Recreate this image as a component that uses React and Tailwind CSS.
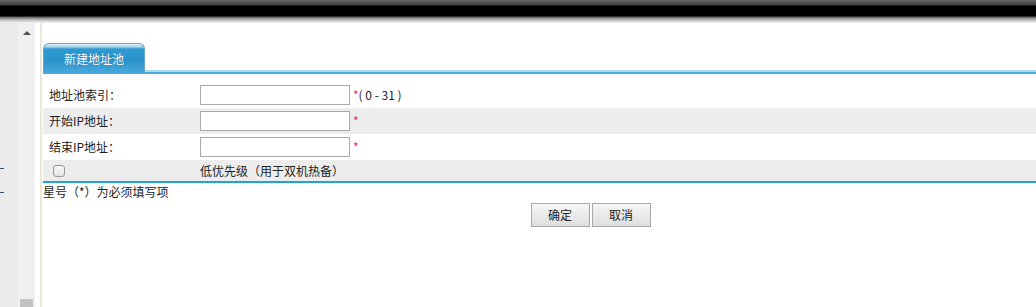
const rows = [
  { label: '地址池索引：', hint: '( 0 - 31 )', bg: 'bg-white' },
  { label: '开始IP地址：', hint: '', bg: 'bg-[#ededed]' },
  { label: '结束IP地址：', hint: '', bg: 'bg-white' },
];

export default function App() {
  return (
    <div className="w-[1036px] h-[307px] overflow-hidden bg-white flex flex-col text-[12px] text-[#222] font-['Noto_Sans_CJK_SC','Noto_Sans',sans-serif]">
      {/* top bar */}
      <div className="h-[23px] shrink-0 bg-[linear-gradient(to_bottom,#6a6a6a_0px,#3c3c3c_5px,#000_6px,#000_16px,#5c5c5c_17px,#a8a8a8_19px,#e4e4e4_22px,#f4f4f4_23px)]" />

      <div className="flex flex-1 min-h-0">
        {/* left sidebar, clipped */}
        <div className="w-[18px] shrink-0 bg-[#ebebeb] relative">
          <div className="absolute left-0 top-[145px] w-[4px] h-px bg-[#3a4a6a]" />
          <div className="absolute left-0 top-[169px] w-[4px] h-px bg-[#3a4a6a]" />
        </div>
        <div className="w-[17px] shrink-0 bg-[#f0f0f0] flex flex-col items-center">
          <div className="mt-[8px] w-0 h-0 border-l-[4px] border-r-[4px] border-b-[4px] border-l-transparent border-r-transparent border-b-[#505050]" />
          <div className="flex-1" />
          <div className="w-[13px] h-[8px] bg-[#c2c2c2]" />
        </div>
        <div className="w-[5px] shrink-0 bg-white" />
        <div className="w-[2px] shrink-0 bg-[#ece8d6]" />

        {/* main */}
        <div className="flex-1 pl-px pt-[20px] flex flex-col">
          <div className="flex items-end h-[31px]">
            <div className="w-[102px] h-[31px] shrink-0 rounded-t-[6px] border border-b-0 border-[#6aa6c8] bg-[linear-gradient(to_bottom,#e0f1f9_0px,#9fd0ea_3px,#2f9ad2_5px,#2a93cb_16px,#4aaadd_30px)] flex items-center justify-center text-white text-[12px] [text-shadow:0_0_1px_rgba(0,60,100,0.5)]">
              新建地址池
            </div>
            <div className="flex-1 h-[4px] bg-[linear-gradient(to_bottom,#a9d9ef_0px,#a9d9ef_2px,#44abdf_2px,#44abdf_4px)]" />
          </div>

          <div className="mt-[8px]">
            {rows.map((r) => (
              <div key={r.label} className={`flex items-center h-[26px] ${r.bg}`}>
                <div className="w-[157px] shrink-0 pl-[6px]">{r.label}</div>
                <div className="w-[150px] h-[20px] shrink-0 border border-[#a9a9a9] bg-white" />
                <span className="ml-[3px] text-[#ff1a6a]">*</span>
                {r.hint && <span className="text-[#222] whitespace-pre">{r.hint}</span>}
              </div>
            ))}
            <div className="flex items-center h-[21px] bg-[#ededed]">
              <div className="w-[157px] shrink-0 pl-[10px]">
                <div className="w-[12px] h-[12px] rounded-[3px] border border-[#9a9a9a] bg-[linear-gradient(to_bottom,#f8f8f8,#e2e2e2)]" />
              </div>
              <div>低优先级（用于双机热备）</div>
            </div>
            <div className="h-[2px] bg-[#1ea2e6]" />
          </div>

          <div className="leading-[15px] mt-px">星号（*）为必须填写项</div>

          <div className="flex justify-center gap-[2px] mt-[4px] pl-[102px]">
            <button className="w-[59px] h-[24px] border border-[#a8a8a8] bg-[linear-gradient(to_bottom,#f6f6f6,#dedede)] text-[12px] text-[#222]">确定</button>
            <button className="w-[59px] h-[24px] border border-[#a8a8a8] bg-[linear-gradient(to_bottom,#f6f6f6,#dedede)] text-[12px] text-[#222]">取消</button>
          </div>
        </div>
      </div>
    </div>
  );
}
